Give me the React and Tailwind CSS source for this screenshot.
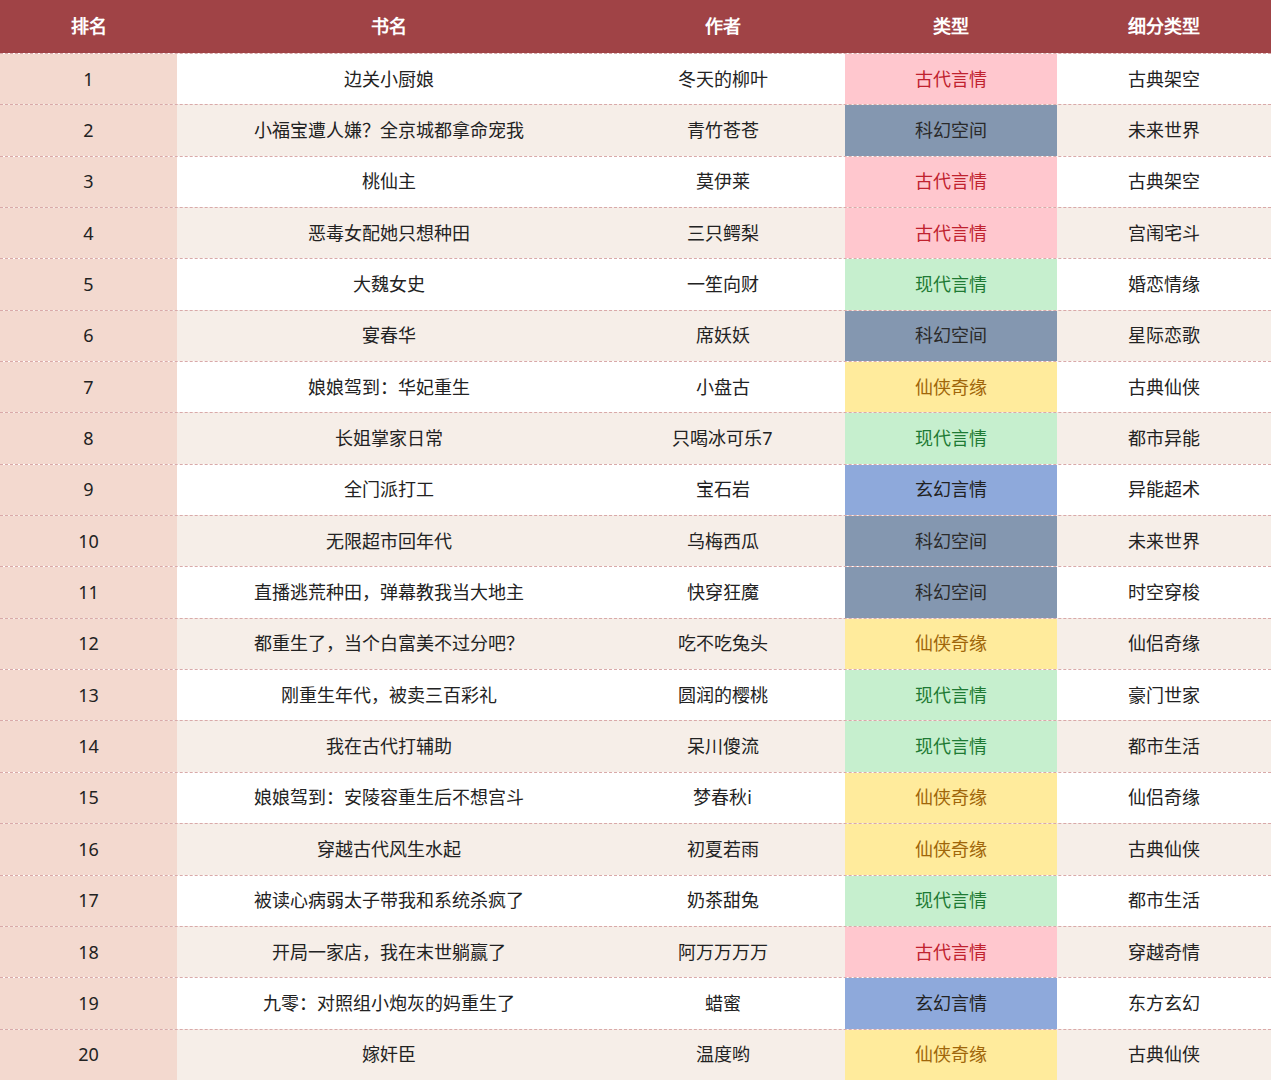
const rows = [
  ["边关小厨娘", "冬天的柳叶", "古代言情", "古典架空"],
  ["小福宝遭人嫌？全京城都拿命宠我", "青竹苍苍", "科幻空间", "未来世界"],
  ["桃仙主", "莫伊莱", "古代言情", "古典架空"],
  ["恶毒女配她只想种田", "三只鳄梨", "古代言情", "宫闱宅斗"],
  ["大魏女史", "一笙向财", "现代言情", "婚恋情缘"],
  ["宴春华", "席妖妖", "科幻空间", "星际恋歌"],
  ["娘娘驾到：华妃重生", "小盘古", "仙侠奇缘", "古典仙侠"],
  ["长姐掌家日常", "只喝冰可乐7", "现代言情", "都市异能"],
  ["全门派打工", "宝石岩", "玄幻言情", "异能超术"],
  ["无限超市回年代", "乌梅西瓜", "科幻空间", "未来世界"],
  ["直播逃荒种田，弹幕教我当大地主", "快穿狂魔", "科幻空间", "时空穿梭"],
  ["都重生了，当个白富美不过分吧？", "吃不吃兔头", "仙侠奇缘", "仙侣奇缘"],
  ["刚重生年代，被卖三百彩礼", "圆润的樱桃", "现代言情", "豪门世家"],
  ["我在古代打辅助", "呆川傻流", "现代言情", "都市生活"],
  ["娘娘驾到：安陵容重生后不想宫斗", "梦春秋i", "仙侠奇缘", "仙侣奇缘"],
  ["穿越古代风生水起", "初夏若雨", "仙侠奇缘", "古典仙侠"],
  ["被读心病弱太子带我和系统杀疯了", "奶茶甜兔", "现代言情", "都市生活"],
  ["开局一家店，我在末世躺赢了", "阿万万万万", "古代言情", "穿越奇情"],
  ["九零：对照组小炮灰的妈重生了", "蜡蜜", "玄幻言情", "东方玄幻"],
  ["嫁奸臣", "温度哟", "仙侠奇缘", "古典仙侠"],
];

const typeStyle = {
  古代言情: "bg-[#ffc7ce] text-[#c0222e]",
  科幻空间: "bg-[#8497b0] text-[#2a2a2a]",
  现代言情: "bg-[#c6efce] text-[#1e7a34]",
  仙侠奇缘: "bg-[#ffeb9c] text-[#a0660a]",
  玄幻言情: "bg-[#8ea9db] text-[#222]",
};

export default function App() {
  return (
    <div lang="zh-CN" className="w-[1271px] h-[1080px] overflow-hidden bg-white text-[18px] text-[#222] font-['Noto_Sans_CJK_SC',sans-serif]">
      <div className="grid grid-cols-[177px_423px_245px_212px_214px] h-[53px] bg-[#a04346] text-white font-bold text-[18px] items-center text-center">
        <div>排名</div><div>书名</div><div>作者</div><div>类型</div><div>细分类型</div>
      </div>
      {rows.map((r, i) => (
        <div key={i} className={`grid grid-cols-[177px_423px_245px_212px_214px] h-[51.35px] text-center border-t border-dashed border-[#d9a9a9] first:border-t-0 ${i % 2 ? "bg-[#f6eee8]" : "bg-white"}`}>
          <div className="bg-[#f3d9cf] flex items-center justify-center">{i + 1}</div>
          <div className="flex items-center justify-center">{r[0]}</div>
          <div className="flex items-center justify-center">{r[1]}</div>
          <div className={`flex items-center justify-center ${typeStyle[r[2]]}`}>{r[2]}</div>
          <div className="flex items-center justify-center">{r[3]}</div>
        </div>
      ))}
    </div>
  );
}
